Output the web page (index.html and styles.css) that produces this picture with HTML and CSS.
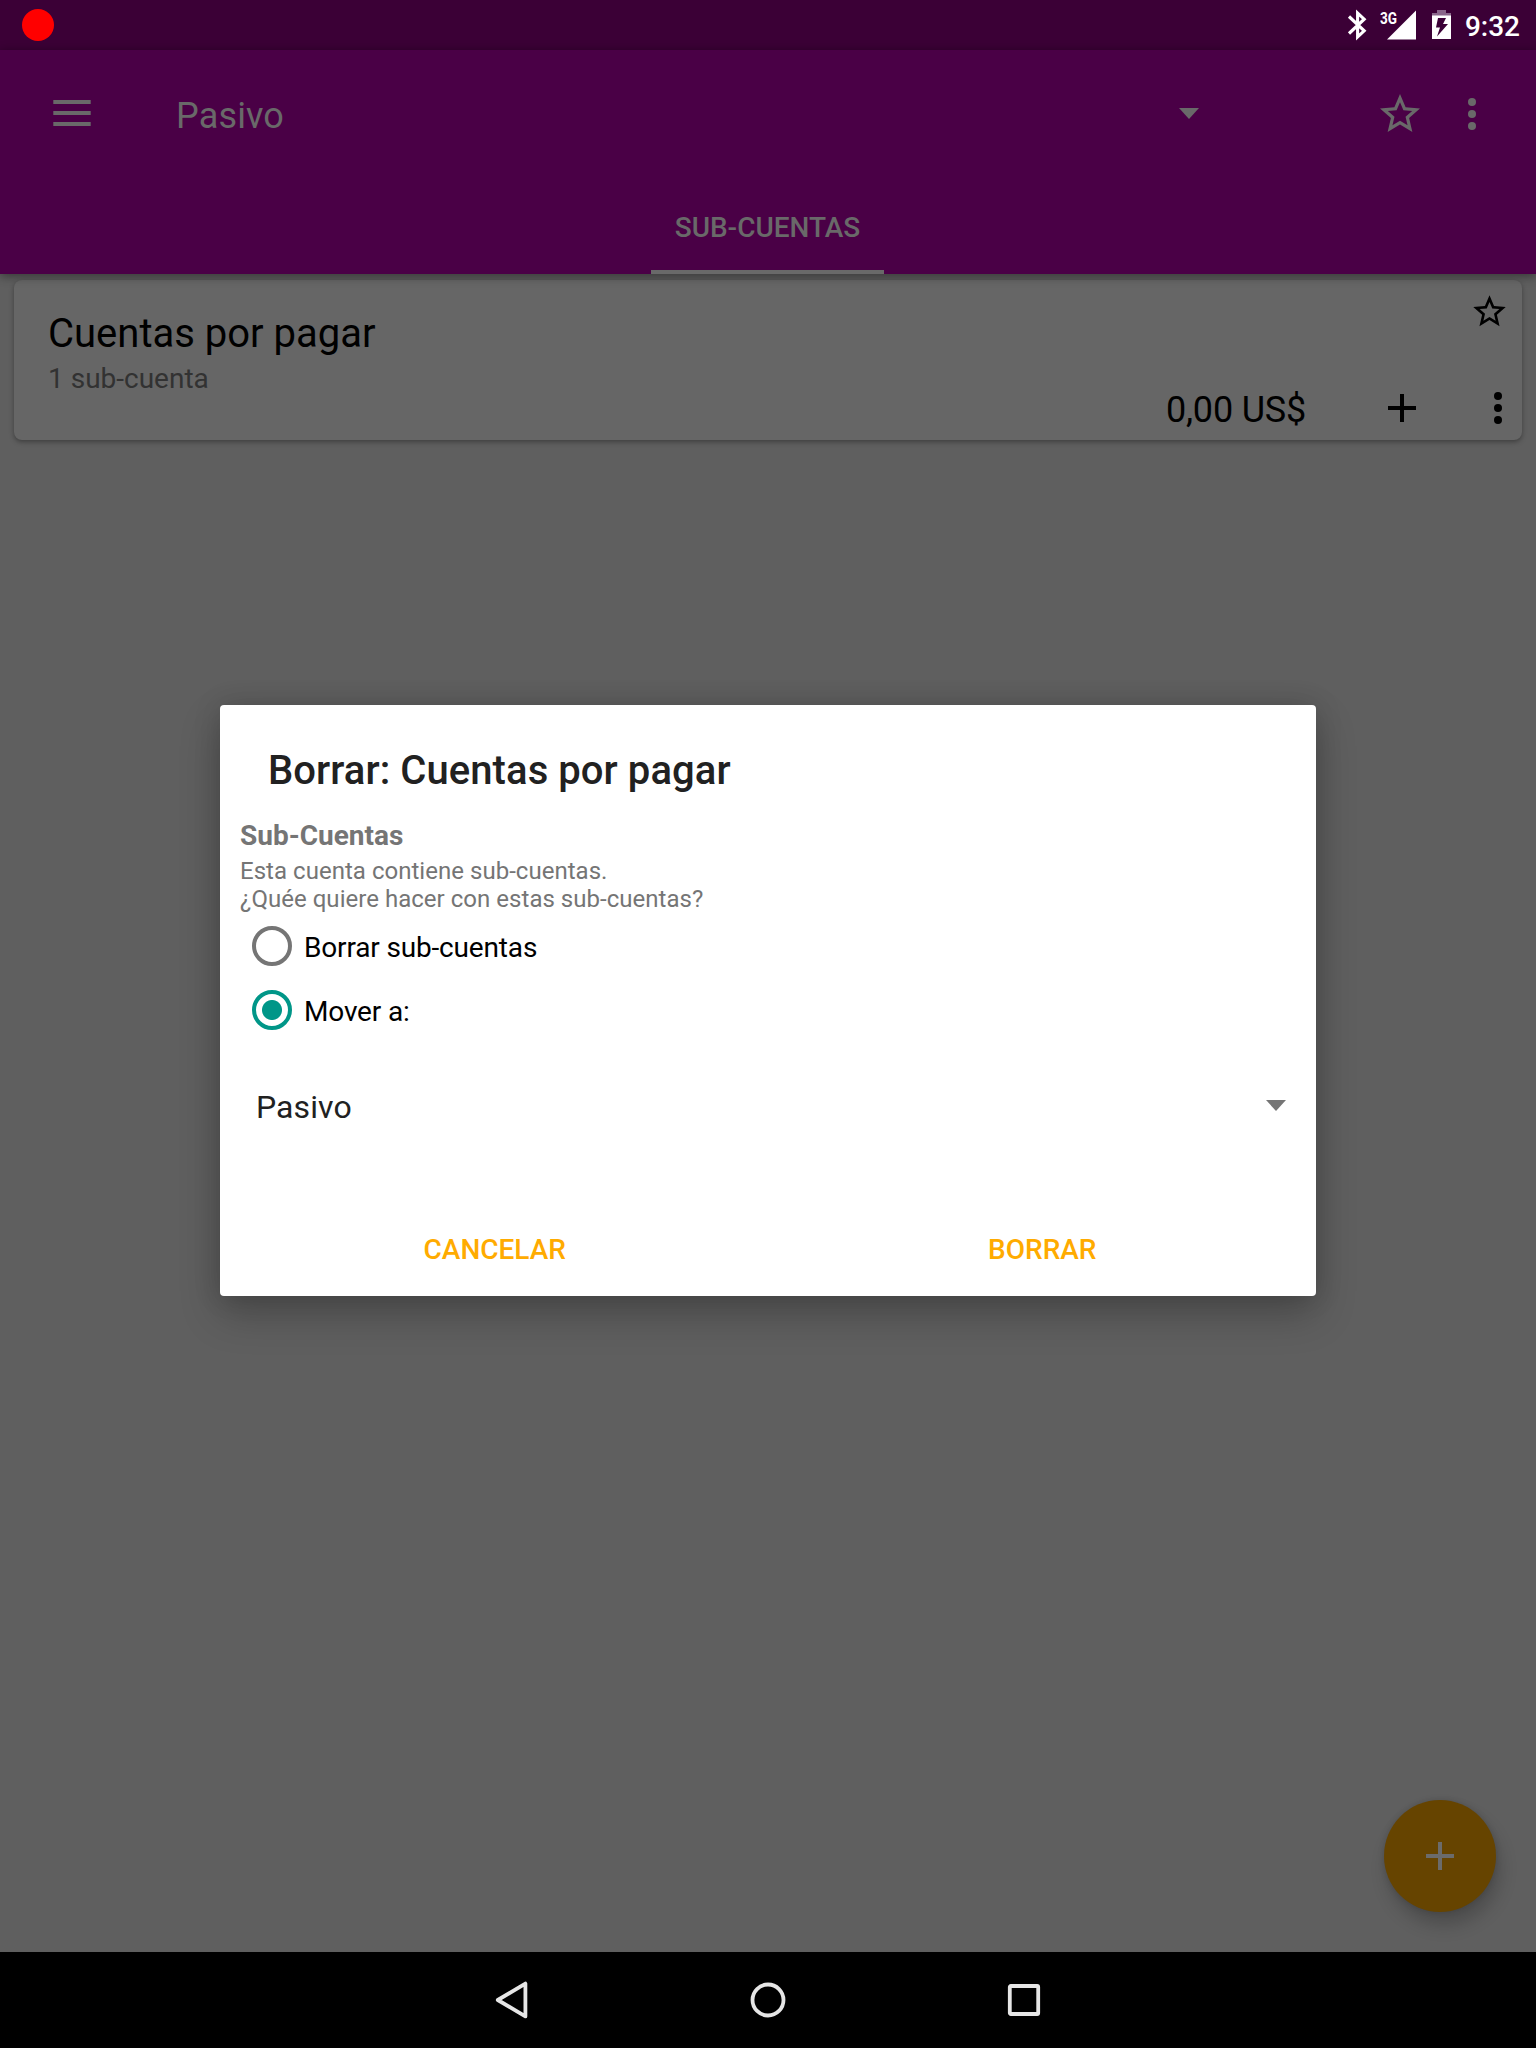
FILE: index.html
```html
<!DOCTYPE html>
<html lang="es">
<head>
<meta charset="utf-8">
<title>Pasivo</title>
<link rel="stylesheet" href="styles.css">
</head>
<body>
<div class="screen">
  <header class="status">
    <span class="record"></span>
    <div class="status-icons">
      <svg class="bluetooth" width="20" height="32" viewBox="0 0 20 32"><path d="M2 7.500L17.200 21.800 10.600 28V4L17.200 10.200 2 24.500" fill="none" stroke="#fff" stroke-width="3.100"/></svg>
      <div class="signal">
        <span class="network">3G</span>
        <svg width="30" height="30" viewBox="0 0 30 30"><path d="M29 0.500V29.500H0z" fill="#fff"/></svg>
      </div>
      <svg class="battery" width="20" height="30" viewBox="0 0 20 30"><path d="M5 0h9v3h5v3H0V3h5z" fill="#89668a"/><path fill-rule="evenodd" d="M0 5.500H19V29H0zM6 8L4 17.500H8L5 26.500 16 14H11L14 8z" fill="#fff"/></svg>
      <span class="clock">9:32</span>
    </div>
  </header>
  <div class="appbar">
    <div class="toolbar">
      <svg class="menu" width="38" height="26" viewBox="0 0 38 26"><path d="M.3 0h37.400v4H.3zM.3 11h37.400v4H.3zM.3 22h37.400v4H.3z"/></svg>
      <span class="account">Pasivo</span>
      <svg class="caret" width="20" height="11" viewBox="0 0 20 11"><path d="M0 0h20L10 11z"/></svg>
      <svg class="star" width="48" height="48" viewBox="0 0 24 24"><path d="M22 9.240l-7.190-.62L12 2 9.190 8.630 2 9.240l5.460 4.730L5.820 21 12 17.270 18.180 21l-1.630-7.030L22 9.240zM12 15.400l-3.760 2.270 1-4.280-3.320-2.880 4.380-.38L12 6.100l1.710 4.040 4.380.38-3.320 2.880 1 4.280L12 15.400z"/></svg>
      <svg class="more" width="8" height="32" viewBox="0 0 8 32"><circle cx="4" cy="4" r="4"/><circle cx="4" cy="16" r="4"/><circle cx="4" cy="28" r="4"/></svg>
    </div>
    <div class="tabs"><span class="tab">SUB-CUENTAS</span></div>
  </div>
  <main class="content">
    <article class="card">
      <div class="card-text">
        <h2 class="card-title">Cuentas por pagar</h2>
        <p class="card-sub">1 sub-cuenta</p>
      </div>
      <div class="card-side">
        <svg class="card-star" width="39" height="39" viewBox="0 0 24 24"><path d="M22 9.240l-7.190-.62L12 2 9.190 8.630 2 9.240l5.460 4.730L5.820 21 12 17.270 18.180 21l-1.630-7.030L22 9.240zM12 15.400l-3.760 2.270 1-4.280-3.320-2.880 4.380-.38L12 6.100l1.710 4.040 4.380.38-3.320 2.880 1 4.280L12 15.400z"/></svg>
        <div class="card-actions">
          <span class="amount">0,00 US$</span>
          <svg class="add" width="28" height="28" viewBox="0 0 28 28"><path d="M12 0h4v12h12v4H16v12h-4V16H0v-4h12z"/></svg>
          <svg width="8" height="32" viewBox="0 0 8 32"><circle cx="4" cy="4" r="4"/><circle cx="4" cy="16" r="4"/><circle cx="4" cy="28" r="4"/></svg>
        </div>
      </div>
    </article>
  </main>
  <nav class="navbar">
    <svg width="40" height="40" viewBox="0 0 40 40"><path d="M6 20L33.600 3.600V36.400z" transform="translate(-.2 0)"/></svg>
    <svg width="40" height="40" viewBox="0 0 40 40"><circle cx="20" cy="20" r="15.500"/></svg>
    <svg width="40" height="40" viewBox="0 0 40 40"><rect x="5.800" y="6" width="28.400" height="28" rx="1"/></svg>
  </nav>

  <div class="fab">
    <svg width="28" height="28" viewBox="0 0 28 28"><path d="M12 0h4v12h12v4H16v12h-4V16H0v-4h12z"/></svg>
  </div>

  <section class="dialog">
    <h1 class="dialog-title">Borrar: Cuentas por pagar</h1>
    <h3 class="section">Sub-Cuentas</h3>
    <p class="message">Esta cuenta contiene sub-cuentas.<br>¿Quée quiere hacer con estas sub-cuentas?</p>
    <div class="option"><span class="radio"></span><span class="label">Borrar sub-cuentas</span></div>
    <div class="option"><span class="radio checked"></span><span class="label">Mover a:</span></div>
    <div class="spinner">
      <span class="value">Pasivo</span>
      <svg class="spinner-caret" width="20" height="11" viewBox="0 0 20 11"><path d="M0 0h20L10 11z"/></svg>
    </div>
    <div class="buttons"><span class="button">CANCELAR</span><span class="button">BORRAR</span></div>
  </section>
</div>
</body>
</html>
```
FILE: styles.css
```css
* { box-sizing: border-box; }
body, h1, h2, h3, p { margin: 0; }
body { font-family: Roboto, "Noto Sans", sans-serif; }
svg { display: block; flex: none; }

.screen {
  position: relative;
  display: flex;
  flex-direction: column;
  width: 1536px;
  height: 2048px;
  overflow: hidden;
  background: #5f5f5f;
}

.status {
  display: flex;
  justify-content: space-between;
  height: 50px;
  padding: 9px 16px 0 22px;
  background: #3b0036;
}
.record { width: 32px; height: 32px; border-radius: 50%; background: #f00; }
.status-icons { display: flex; color: #fff; }
.bluetooth { margin-right: 13px; }
.signal { position: relative; width: 36px; padding: 1px 0 0 7px; margin-right: 16px; }
.network {
  position: absolute;
  left: 0;
  top: 1px;
  font-size: 17px;
  line-height: 16px;
  font-weight: 700;
  transform: scaleX(.8);
  transform-origin: left;
}
.battery { margin: 1px 13px 0 0; }
.clock { font-size: 28px; font-weight: 500; line-height: 36px; }

.appbar {
  position: relative;
  height: 224px;
  background: #4a0046;
  color: #696969;
  fill: #696969;
  box-shadow: 0 2px 10px rgba(0, 0, 0, .45);
}
.toolbar { display: flex; align-items: center; height: 128px; padding: 0 60px 0 53px; }
.menu { margin-top: -2px; }
.account { flex: 1; margin: 4px 0 0 85px; font-size: 36px; line-height: 42px; letter-spacing: .15px; }
.caret { margin: -1px 177px 0 0; }
.star { margin-right: 44px; }
.tabs { display: flex; justify-content: center; height: 96px; padding-right: 1px; }
.tab {
  width: 233px;
  border-bottom: 4px solid #696969;
  font-size: 28px;
  font-weight: 500;
  line-height: 100px;
  text-align: center;
}

.content { flex: 1; padding: 6px 14px 0; }
.card {
  display: flex;
  justify-content: space-between;
  height: 160px;
  border-radius: 8px;
  background: #666;
  box-shadow: 0 2px 5px rgba(0, 0, 0, .35);
  fill: #000;
}
.card-text { padding: 30px 0 0 34px; }
.card-title { font-size: 40px; font-weight: 400; line-height: 48px; }
.card-sub { margin-top: 3px; color: #323232; font-size: 28px; line-height: 36px; }
.card-side { display: flex; flex-direction: column; align-items: flex-end; padding: 12px 12px 0 0; }
.card-star { margin-right: 1px; }
.card-actions { display: flex; align-items: center; margin: 55px 8px 0 0; height: 44px; }
.amount { margin-top: 4px; font-size: 36px; line-height: 40px; letter-spacing: -.2px; }
.add { margin: 0 78px 0 82px; }

.navbar {
  display: flex;
  justify-content: center;
  align-items: center;
  gap: 216px;
  height: 96px;
  background: #000;
  fill: none;
  stroke: #e6e6e6;
  stroke-width: 3.8px;
  stroke-linejoin: round;
}

.fab {
  position: absolute;
  right: 40px;
  bottom: 136px;
  display: grid;
  place-items: center;
  width: 112px;
  height: 112px;
  border-radius: 50%;
  background: #640;
  fill: #6b6b6b;
  box-shadow: 4px 13px 18px rgba(0, 0, 0, .2), 0 0 6px rgba(0, 0, 0, .15);
}

.dialog {
  position: absolute;
  left: 220px;
  top: 705px;
  display: flex;
  flex-direction: column;
  width: 1096px;
  height: 591px;
  padding-top: 41px;
  border-radius: 4px;
  background: #fff;
  color: #000;
  box-shadow: 0 18px 40px rgba(0, 0, 0, .24), 0 0 28px rgba(0, 0, 0, .14);
}
.dialog-title { padding-left: 48px; color: #212121; font-size: 40px; font-weight: 500; line-height: 50px; letter-spacing: .07px; }
.section { margin: 23px 20px 0; color: #757575; font-size: 28px; font-weight: 700; line-height: 34px; }
.message { margin: 4px 20px 1px; color: #757575; font-size: 24px; line-height: 28px; letter-spacing: .03px; }
.option { display: flex; align-items: center; height: 64px; padding-left: 32px; }
.radio { width: 40px; height: 40px; border: 4px solid #757575; border-radius: 50%; }
.checked { border-color: #009688; background: radial-gradient(circle, #009688 9.5px, transparent 10.5px); }
.label { margin: 4px 0 0 12px; font-size: 28px; line-height: 34px; letter-spacing: -.16px; }
.spinner {
  display: flex;
  align-items: center;
  justify-content: space-between;
  height: 96px;
  margin-top: 16px;
  padding: 0 30px 0 36px;
  fill: #757575;
}
.spinner-caret { margin-top: -1px; }
.value { margin-top: 2px; color: #212121; font-size: 32px; line-height: 40px; letter-spacing: .1px; }
.buttons { display: flex; margin-top: auto; height: 96px; padding-left: 1px; }
.button { flex: 1; color: #ffab00; font-size: 28px; font-weight: 500; line-height: 100px; text-align: center; }
```
